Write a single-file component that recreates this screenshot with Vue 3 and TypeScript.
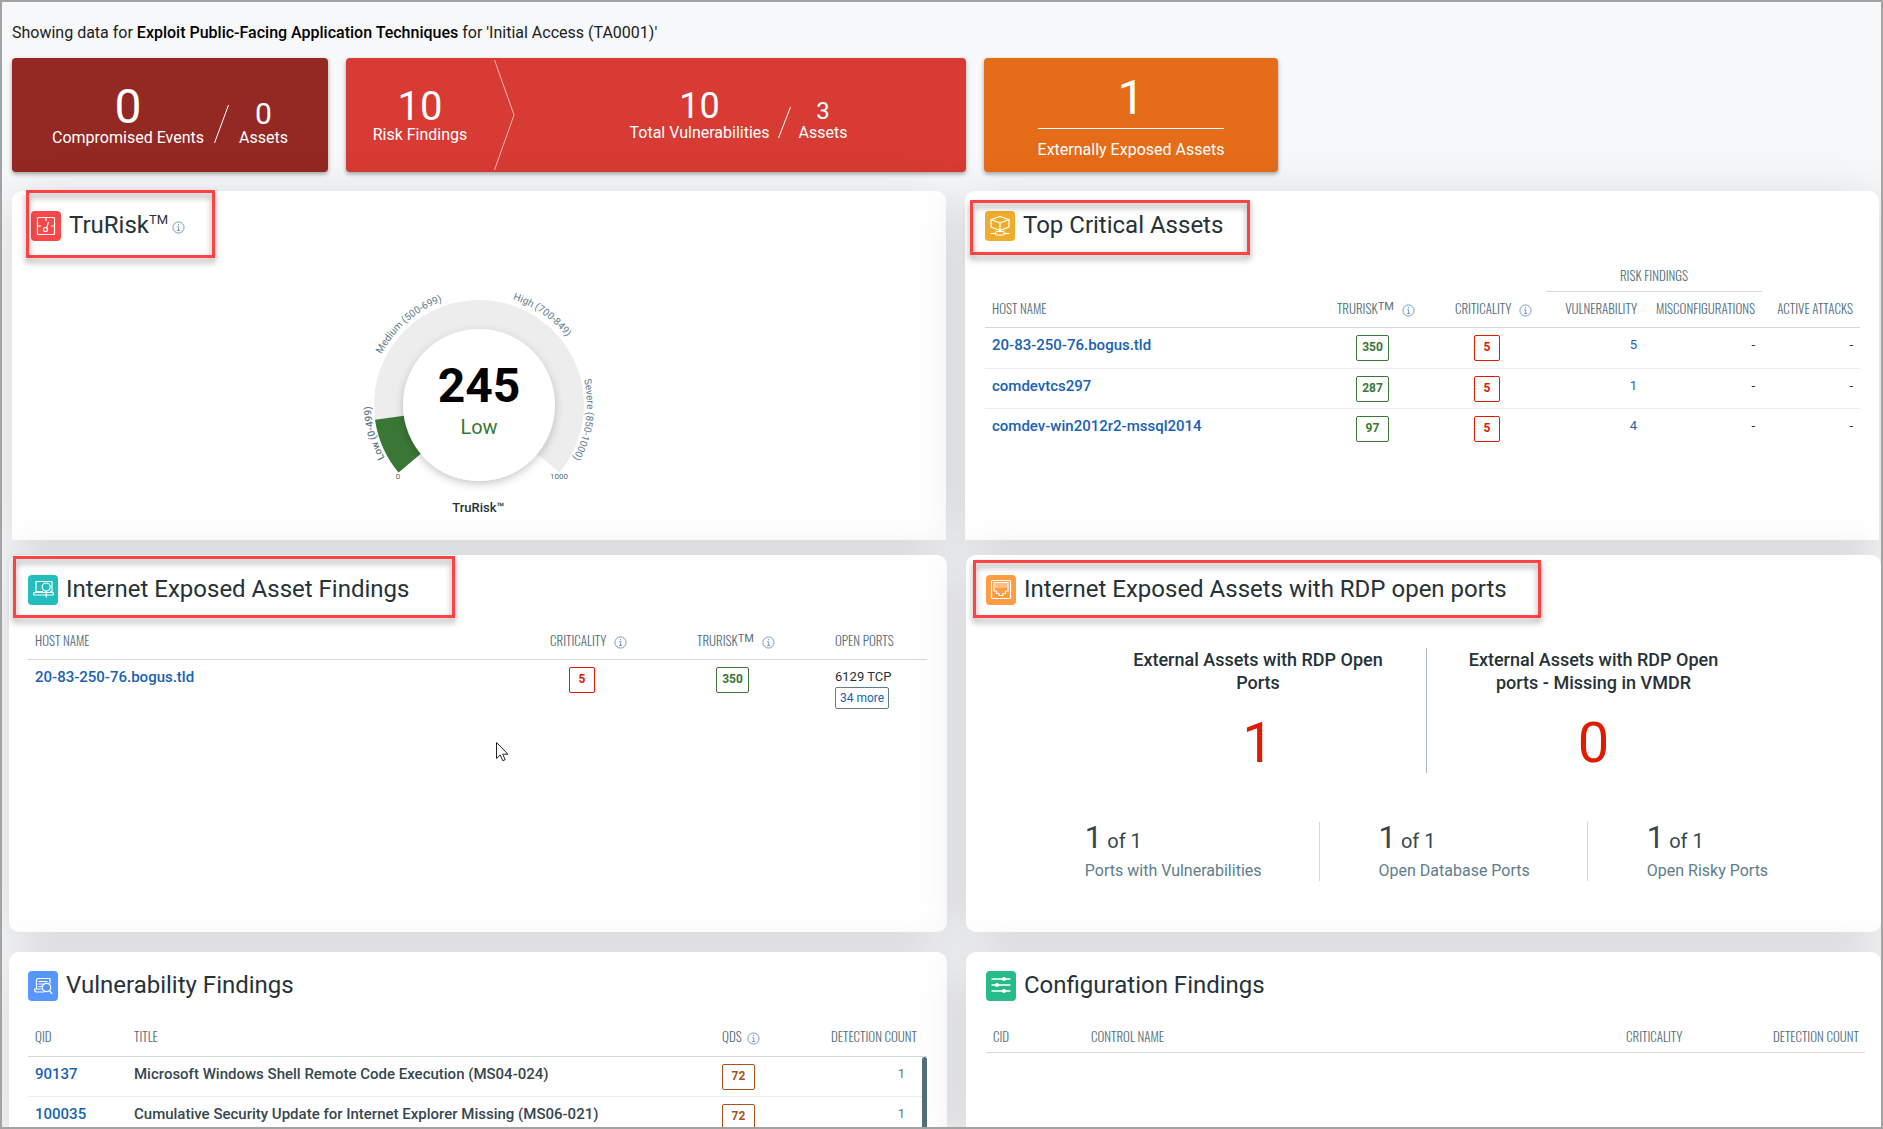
<script setup lang="ts">
interface AssetRow {
  host: string
  score: number
  criticality: number
  vulnerability: number
}

const criticalAssets: AssetRow[] = [
  { host: '20-83-250-76.bogus.tld', score: 350, criticality: 5, vulnerability: 5 },
  { host: 'comdevtcs297', score: 287, criticality: 5, vulnerability: 1 },
  { host: 'comdev-win2012r2-mssql2014', score: 97, criticality: 5, vulnerability: 4 },
]

const vulnerabilities = [
  { qid: '90137', title: 'Microsoft Windows Shell Remote Code Execution (MS04-024)', qds: 72, count: 1 },
  { qid: '100035', title: 'Cumulative Security Update for Internet Explorer Missing (MS06-021)', qds: 72, count: 1 },
]

const portStats = ['Ports with Vulnerabilities', 'Open Database Ports', 'Open Risky Ports']

// Gauge geometry: angles are degrees clockwise from the top.
const cx = 120
const cy = 125

function point(r: number, deg: number): string {
  const a = (deg * Math.PI) / 180
  return `${(cx + r * Math.sin(a)).toFixed(2)} ${(cy - r * Math.cos(a)).toFixed(2)}`
}

function band(from: number, to: number): string {
  const large = to - from > 180 ? 1 : 0
  return `M${point(105, from)} A105 105 0 ${large} 1 ${point(105, to)} L${point(74, to)} A74 74 0 ${large} 0 ${point(74, from)} Z`
}

function labelArc(r: number, mid: number): string {
  return `M${point(r, mid - 40)} A${r} ${r} 0 0 1 ${point(r, mid + 40)}`
}

const scoreEnd = -130 + (245 / 499) * 65
const gaugeLabels = [
  { id: 'arc-low', text: 'Low (0-499)', d: labelArc(108, -105), strong: true },
  { id: 'arc-medium', text: 'Medium (500-699)', d: labelArc(110, -41), strong: false },
  { id: 'arc-high', text: 'High (700-849)', d: labelArc(111, 35), strong: false },
  { id: 'arc-severe', text: 'Severe (850-1000)', d: labelArc(108, 98), strong: false },
]
</script>

<template>
  <main class="page">
    <svg class="defs" width="0" height="0" aria-hidden="true">
      <symbol id="info" viewBox="0 0 14 14">
        <circle cx="7" cy="7" r="6" fill="none" stroke="#6f93c4" />
        <path d="M7 3.2v1.5M5.6 6.2H7.2V10M5.4 10.2h3.4" fill="none" stroke="#6f93c4" />
      </symbol>
    </svg>

    <p class="intro">
      Showing data for <strong>Exploit Public-Facing Application Techniques</strong> for 'Initial Access (TA0001)'
    </p>

    <section class="cards">
      <article class="card card-dark">
        <div class="stat"><span class="num n48">0</span><span>Compromised Events</span></div>
        <svg class="slash" width="15" height="38" viewBox="0 0 15 38"><path d="M14.5 0L.5 38" stroke="#fff" fill="none" /></svg>
        <div class="stat"><span class="num n30">0</span><span>Assets</span></div>
      </article>
      <article class="card card-red">
        <div class="risk"><div class="stat"><span class="num n40">10</span><span>Risk Findings</span></div></div>
        <svg class="chevron" width="21" height="110" viewBox="0 0 21 110"><path d="M.5 0L20 55L.5 110" stroke="#f3b5b0" fill="none" /></svg>
        <div class="totals">
          <div class="stat"><span class="num n36">10</span><span>Total Vulnerabilities</span></div>
          <svg class="slash" width="13" height="31" viewBox="0 0 13 31"><path d="M12.5 0L.5 31" stroke="#fff" fill="none" /></svg>
          <div class="stat"><span class="num n24">3</span><span>Assets</span></div>
        </div>
      </article>
      <article class="card card-orange">
        <div class="exposed"><span class="num n48">1</span><span class="exposed-label">Externally Exposed Assets</span></div>
      </article>
    </section>

    <div class="row row-top">
      <section class="panel">
        <header class="head">
          <svg class="icon" viewBox="0 0 30 30">
            <rect width="30" height="30" rx="4" fill="#f94848" />
            <g fill="none" stroke="#fff" stroke-width="1.2">
              <rect x="6.5" y="6.5" width="17" height="17" rx="1" />
              <path d="M15 6.5v3.5M6.5 15H10M20 15h3.5M15.5 17.5L17.5 11" />
              <circle cx="14.5" cy="18.5" r="2" />
            </g>
          </svg>
          <h2>TruRisk<sup class="tm">TM</sup></h2>
          <svg class="info info-head"><use href="#info" /></svg>
        </header>
        <span class="mark mark-trurisk"></span>
        <div class="gauge">
          <svg class="dial" width="240" height="200" viewBox="0 0 240 200">
            <defs>
              <filter id="soft" x="-20%" y="-20%" width="140%" height="140%">
                <feDropShadow dx="0" dy="3" stdDeviation="4" flood-color="#000" flood-opacity="0.22" />
              </filter>
              <path v-for="l in gaugeLabels" :id="l.id" :key="l.id" :d="l.d" />
            </defs>
            <path :d="band(-130, 130)" fill="#ededed" />
            <path :d="band(-130, scoreEnd)" fill="#3a7735" />
            <circle cx="120" cy="125" r="76" fill="#fff" filter="url(#soft)" />
            <text v-for="l in gaugeLabels" :key="l.text" :class="['arc-label', { strong: l.strong }]">
              <textPath :href="'#' + l.id" startOffset="50%" text-anchor="middle">{{ l.text }}</textPath>
            </text>
            <text class="tick" x="39" y="199" text-anchor="middle">0</text>
            <text class="tick" x="200" y="199" text-anchor="middle">1000</text>
            <text class="score" x="120" y="122" text-anchor="middle">245</text>
            <text class="level" x="120" y="154" text-anchor="middle">Low</text>
          </svg>
          <div class="gauge-title">TruRisk™</div>
        </div>
      </section>

      <section class="panel panel-right">
        <header class="head">
          <svg class="icon" viewBox="0 0 30 30">
            <rect width="30" height="30" rx="4" fill="#efad2d" />
            <g fill="none" stroke="#fff" stroke-width="1.2" stroke-linejoin="round">
              <path d="M15 5.500l9 3v7.500l-9 3.500-9-3.500V8.500zM6 8.500l9 3.500L24 8.500M15 12v8.500M5.500 22.500h5M19.500 22.500h5" />
              <rect x="10.500" y="20.500" width="9" height="3.500" rx="1.500" />
            </g>
          </svg>
          <h2>Top Critical Assets</h2>
        </header>
        <span class="mark mark-critical"></span>
        <table class="critical">
          <colgroup><col /><col class="w118" /><col class="w98" /><col class="w98" /><col class="w118" /><col class="w98" /></colgroup>
          <thead>
            <tr class="group">
              <td colspan="3"></td>
              <th colspan="2" scope="colgroup">RISK FINDINGS</th>
              <td></td>
            </tr>
            <tr>
              <th scope="col">HOST NAME</th>
              <th scope="col">TRURISK<sup>TM</sup><svg class="info"><use href="#info" /></svg></th>
              <th scope="col">CRITICALITY<svg class="info"><use href="#info" /></svg></th>
              <th scope="col" class="end">VULNERABILITY</th>
              <th scope="col" class="end">MISCONFIGURATIONS</th>
              <th scope="col" class="end">ACTIVE ATTACKS</th>
            </tr>
          </thead>
          <tbody>
            <tr v-for="a in criticalAssets" :key="a.host">
              <td><a href="#" class="strong-link">{{ a.host }}</a></td>
              <td class="badge-cell"><span class="badge green">{{ a.score }}</span></td>
              <td class="badge-cell"><span class="badge red">{{ a.criticality }}</span></td>
              <td class="end"><a href="#">{{ a.vulnerability }}</a></td>
              <td class="end">-</td>
              <td class="end">-</td>
            </tr>
          </tbody>
        </table>
      </section>
    </div>

    <div class="row row-mid">
      <section class="panel">
        <header class="head">
          <svg class="icon" viewBox="0 0 30 30">
            <rect width="30" height="30" rx="4" fill="#22bdbd" />
            <g fill="none" stroke="#fff" stroke-width="1.2" stroke-linejoin="round">
              <path d="M15 16.500H8v-10h16v10h-2" />
              <rect x="5.500" y="17.500" width="20" height="2.500" rx="1" />
              <circle cx="18.200" cy="12" r="4" />
              <path d="M18.200 16v6.500" />
            </g>
          </svg>
          <h2>Internet Exposed Asset Findings</h2>
        </header>
        <span class="mark mark-findings"></span>
        <table class="exposed-table">
          <colgroup><col /><col class="w147" /><col class="w138" /><col class="w99" /></colgroup>
          <thead>
            <tr>
              <th scope="col">HOST NAME</th>
              <th scope="col">CRITICALITY<svg class="info"><use href="#info" /></svg></th>
              <th scope="col">TRURISK<sup>TM</sup><svg class="info"><use href="#info" /></svg></th>
              <th scope="col">OPEN PORTS</th>
            </tr>
          </thead>
          <tbody>
            <tr>
              <td><a href="#" class="strong-link">20-83-250-76.bogus.tld</a></td>
              <td class="badge-cell"><span class="badge red">5</span></td>
              <td class="badge-cell"><span class="badge green">350</span></td>
              <td>6129 TCP<button type="button" class="more">34 more</button></td>
            </tr>
          </tbody>
        </table>
        <svg class="cursor" width="13" height="20" viewBox="0 0 13 20">
          <path d="M.5.500v16l3.700-3.500 2.600 5.700 2.400-1-2.500-5.500h5.300z" fill="#fff" stroke="#223" />
        </svg>
      </section>

      <section class="panel panel-right">
        <header class="head">
          <svg class="icon" viewBox="0 0 30 30">
            <rect width="30" height="30" rx="4" fill="#ff9b40" />
            <g fill="none" stroke="#fff" stroke-width="1.2" stroke-linejoin="round">
              <rect x="5.500" y="5.500" width="19" height="18" rx="1" />
              <path d="M8 7.500h14v8.500h-2.500v2.500h-2.500v2h-4v-2h-2.500v-2.500H8z" />
              <path d="M10 8v5M12 8v5M14 8v5M16 8v5M18 8v5M20 8v5" stroke="#ffe0c8" stroke-width="1" />
            </g>
          </svg>
          <h2>Internet Exposed Assets with RDP open ports</h2>
        </header>
        <span class="mark mark-rdp"></span>
        <div class="rdp">
          <div class="rdp-item"><h3>External Assets with RDP Open Ports</h3><span class="rdp-num">1</span></div>
          <div class="rdp-item"><h3>External Assets with RDP Open ports - Missing in VMDR</h3><span class="rdp-num">0</span></div>
        </div>
        <div class="ports">
          <div v-for="p in portStats" :key="p" class="port">
            <div class="port-value"><span class="port-big">1</span> of 1</div>
            <div class="port-label">{{ p }}</div>
          </div>
        </div>
      </section>
    </div>

    <div class="row row-low">
      <section class="panel">
        <header class="head">
          <svg class="icon" viewBox="0 0 30 30">
            <rect width="30" height="30" rx="4" fill="#5597ff" />
            <g fill="none" stroke="#fff" stroke-width="1.2" stroke-linejoin="round" stroke-linecap="round">
              <path d="M8.500 18V9q0-1.500 1.500-1.500h12V12M11 10.500h8M11 13h4M11 15.500h3M13 18H6.500q0 3 2 3h7" />
              <circle cx="18.500" cy="16.500" r="4.200" />
              <path d="M21.500 19.700l2.500 3" />
            </g>
          </svg>
          <h2>Vulnerability Findings</h2>
        </header>
        <div class="scroller">
          <table class="vuln">
            <colgroup><col class="w99" /><col /><col class="w98" /><col class="w114" /></colgroup>
            <thead>
              <tr>
                <th scope="col">QID</th>
                <th scope="col">TITLE</th>
                <th scope="col">QDS<svg class="info info-tight"><use href="#info" /></svg></th>
                <th scope="col" class="end">DETECTION COUNT</th>
              </tr>
            </thead>
            <tbody>
              <tr v-for="v in vulnerabilities" :key="v.qid">
                <td><a href="#" class="strong-link">{{ v.qid }}</a></td>
                <td class="title">{{ v.title }}</td>
                <td class="badge-cell"><span class="badge brown">{{ v.qds }}</span></td>
                <td class="end count">{{ v.count }}</td>
              </tr>
            </tbody>
          </table>
          <span class="thumb"></span>
        </div>
      </section>

      <section class="panel panel-right">
        <header class="head">
          <svg class="icon" viewBox="0 0 30 30">
            <rect width="30" height="30" rx="4" fill="#27ba8b" />
            <g stroke="#fff" stroke-width="1.4" stroke-linecap="round">
              <path d="M6 8h18M6 14h18M6 20h18" />
            </g>
            <g fill="#fff"><circle cx="18" cy="8" r="2" /><circle cx="11" cy="14" r="2" /><circle cx="18" cy="20" r="2" /></g>
          </svg>
          <h2>Configuration Findings</h2>
        </header>
        <table class="config">
          <colgroup><col class="w98" /><col /><col class="w147" /><col class="w99" /></colgroup>
          <thead>
            <tr>
              <th scope="col">CID</th>
              <th scope="col">CONTROL NAME</th>
              <th scope="col">CRITICALITY</th>
              <th scope="col" class="end">DETECTION COUNT</th>
            </tr>
          </thead>
        </table>
      </section>
    </div>
  </main>
</template>

<style>
body {
  margin: 0;
}
</style>

<style scoped>
* {
  box-sizing: border-box;
}
.page {
  display: flex;
  flex-direction: column;
  height: 100vh;
  overflow: hidden;
  border: 2px solid #a3a3a4;
  background: #f7f8fa;
  font-family: Roboto, "Liberation Sans", sans-serif;
  font-size: 16px;
  color: #263238;
}
.defs {
  position: absolute;
}
.intro {
  margin: 20px 10px 15px;
  line-height: 21px;
  color: #212121;
}
.intro strong {
  font-weight: 500;
  color: #000;
}

.cards {
  display: flex;
  gap: 18px;
  padding: 0 10px;
  margin-bottom: 19px;
}
.card {
  display: flex;
  height: 114px;
  border-radius: 4px;
  color: #fff;
  line-height: 18px;
  box-shadow: 0 2px 4px rgba(0, 0, 0, 0.35);
}
.card-dark {
  width: 316px;
  align-items: flex-end;
  justify-content: center;
  gap: 10px;
  padding-bottom: 25px;
  background: #942822;
}
.card-red {
  width: 620px;
  align-items: center;
  background: #d73b33;
}
.card-orange {
  width: 294px;
  justify-content: center;
  background: #e56c19;
}
.stat {
  display: flex;
  flex-direction: column;
  align-items: center;
}
.n48 {
  font-size: 48px;
  line-height: 44px;
}
.n40 {
  font-size: 40px;
  line-height: 38px;
}
.n36 {
  font-size: 36px;
  line-height: 36px;
}
.n30 {
  font-size: 30px;
  line-height: 30px;
}
.n24 {
  font-size: 24px;
  line-height: 26px;
}
.slash {
  margin-bottom: 4px;
}
.risk {
  display: flex;
  justify-content: center;
  width: 148px;
  padding-top: 2px;
}
.totals {
  display: flex;
  flex: 1;
  align-items: flex-end;
  justify-content: center;
  gap: 8px;
  padding-right: 4px;
}
.exposed {
  display: flex;
  flex-direction: column;
  align-items: center;
  padding-top: 18px;
}
.exposed-label {
  margin-top: 8px;
  padding-top: 12px;
  border-top: 1px solid #fff;
}

.row {
  display: grid;
  grid-template-columns: minmax(0, 938fr) minmax(0, 915fr);
  gap: 19px;
}
.row-top {
  grid-template-columns: minmax(0, 934fr) minmax(0, 914fr);
  padding: 0 2px 0 10px;
}
.row-mid,
.row-low {
  padding-left: 7px;
}
.row-mid {
  margin: 15px 0 20px;
}
.row-low {
  flex: 1;
}
.panel {
  position: relative;
  padding: 20px 20px 0 19px;
  border-radius: 10px;
  background: #fff;
  box-shadow: 0 8px 52px rgba(0, 0, 0, 0.14);
}
.panel-right {
  padding: 20px 19px 0 20px;
}
.row-top .panel {
  height: 349px;
  border-radius: 10px 10px 0 0;
}
.row-mid .panel {
  height: 377px;
}
.row-mid .panel-right {
  padding-right: 16px;
}
.row-low .panel {
  padding-top: 19px;
  border-radius: 10px 10px 0 0;
}
.row-low .panel-right {
  padding-right: 16px;
}
.head {
  display: flex;
  align-items: center;
  gap: 8px;
  height: 30px;
}
.icon {
  flex: none;
  width: 30px;
  height: 30px;
}
h2 {
  margin: 0 0 2px;
  font-size: 24px;
  font-weight: 400;
  line-height: 28px;
  color: #263238;
}
.tm {
  font-size: 13px;
  line-height: 1;
  vertical-align: 9px;
}
.info {
  width: 13px;
  height: 13px;
  margin-left: 8px;
  vertical-align: -3px;
}
.info-head {
  margin: 2px 0 0 -4px;
}
.info-tight {
  margin-left: 5px;
}

.mark {
  position: absolute;
  border: 3px solid #ff4343;
  filter: drop-shadow(0 4px 3px rgba(0, 0, 0, 0.4));
  pointer-events: none;
}
.mark-trurisk {
  left: 14px;
  top: -1px;
  width: 189px;
  height: 68px;
}
.mark-critical {
  left: 5px;
  top: 9px;
  width: 280px;
  height: 55px;
}
.mark-findings {
  left: 4px;
  top: 1px;
  width: 442px;
  height: 62px;
}
.mark-rdp {
  left: 7px;
  top: 5px;
  width: 568px;
  height: 58px;
}

.gauge {
  display: flex;
  flex-direction: column;
  align-items: center;
  margin-top: 39px;
}
.dial {
  overflow: visible;
}
.arc-label {
  font-size: 10px;
  fill: #607d8b;
}
.arc-label.strong {
  font-weight: 500;
}
.tick {
  font-size: 8px;
  fill: #546e7a;
}
.score {
  font-size: 48px;
  font-weight: 700;
  fill: #000;
}
.level {
  font-size: 20px;
  fill: #3a7735;
}
.gauge-title {
  margin-top: 19px;
  font-size: 13px;
  font-weight: 500;
  line-height: 18px;
}

table {
  width: 100%;
  margin-top: 25px;
  border-spacing: 0;
  table-layout: fixed;
}
th,
td {
  padding: 0 7px;
  text-align: left;
  vertical-align: top;
}
th {
  height: 30px;
  border-bottom: 1px solid #cfd8dc;
  font-family: Oswald, "Roboto Condensed", "Arial Narrow", "Open Sans Condensed", Roboto, sans-serif;
  font-size: 13px;
  font-weight: 300;
  line-height: 20px;
  color: #546e7a;
  white-space: nowrap;
}
th sup {
  font-family: Roboto, sans-serif;
  font-size: 11px;
  font-weight: 400;
  line-height: 1;
  vertical-align: 4px;
}
tbody td {
  height: 40px;
  padding-top: 8px;
  border-bottom: 1px solid #e8edf0;
  font-size: 13px;
  line-height: 18px;
}
tbody tr:last-child td {
  border-bottom: 0;
}
.end {
  text-align: right;
}
.group th {
  height: 27px;
  text-align: center;
}
.critical {
  margin-top: 24px;
}
.critical tr:not(.group) th {
  height: 36px;
  padding-top: 6px;
}
.critical tbody tr:first-child td {
  height: 41px;
}
.w98 {
  width: 98px;
}
.w99 {
  width: 99px;
}
.w114 {
  width: 114px;
}
.w118 {
  width: 118px;
}
.w138 {
  width: 138px;
}
.w147 {
  width: 147px;
}
a {
  color: #1a62b3;
  text-decoration: none;
}
.strong-link {
  font-size: 15px;
  font-weight: 500;
}
tbody .badge-cell {
  padding: 7px 0 0 26px;
}
.badge {
  display: block;
  width: 33px;
  height: 26px;
  border: 1px solid;
  border-radius: 2px;
  font-size: 12px;
  font-weight: 700;
  line-height: 23px;
  text-align: center;
}
.green {
  color: #3a7735;
}
.red {
  width: 26px;
  color: #e01b00;
}
.brown {
  color: #a8511d;
}
.more {
  display: block;
  height: 22px;
  margin-top: 1px;
  padding: 0 4px;
  border: 1px solid #607d8b;
  border-radius: 2px;
  background: #fff;
  font: 12px/18px Roboto, sans-serif;
  color: #1a62b3;
}
.cursor {
  position: absolute;
  left: 487px;
  top: 187px;
}

.rdp {
  display: flex;
  justify-content: center;
  margin-top: 43px;
}
.rdp-item {
  display: flex;
  flex-direction: column;
  align-items: center;
  width: 335px;
  height: 125px;
}
.rdp-item + .rdp-item {
  border-left: 1px solid #a9b8c0;
}
h3 {
  width: 260px;
  margin: 0;
  font-size: 18px;
  font-weight: 500;
  line-height: 23px;
  text-align: center;
}
.rdp-num {
  margin-top: 21px;
  font-size: 56px;
  line-height: 56px;
  color: #e01b00;
}
.ports {
  display: flex;
  justify-content: center;
  margin-top: 49px;
}
.port {
  height: 59px;
  padding: 0 57px 0 59px;
}
.port + .port {
  border-left: 1px solid #cfd8dc;
}
.port-value {
  font-size: 20px;
  line-height: 32px;
  color: #37474f;
}
.port-big {
  font-size: 31px;
}
.port-label {
  margin-top: 5px;
  line-height: 18px;
  color: #607d8b;
}

.scroller {
  position: relative;
}
.vuln th {
  height: 31px;
}
.vuln th.end {
  padding-right: 10px;
}
.vuln tbody .badge-cell {
  padding-left: 7px;
}
.title {
  font-size: 15px;
  font-weight: 500;
  color: #37474f;
}
.vuln tbody .count {
  padding-right: 22px;
  color: #607d8b;
}
.thumb {
  position: absolute;
  top: 31px;
  right: 0;
  width: 5px;
  height: 120px;
  border-radius: 3px;
  background: #546e7a;
}
.config th {
  height: 27px;
}
</style>
